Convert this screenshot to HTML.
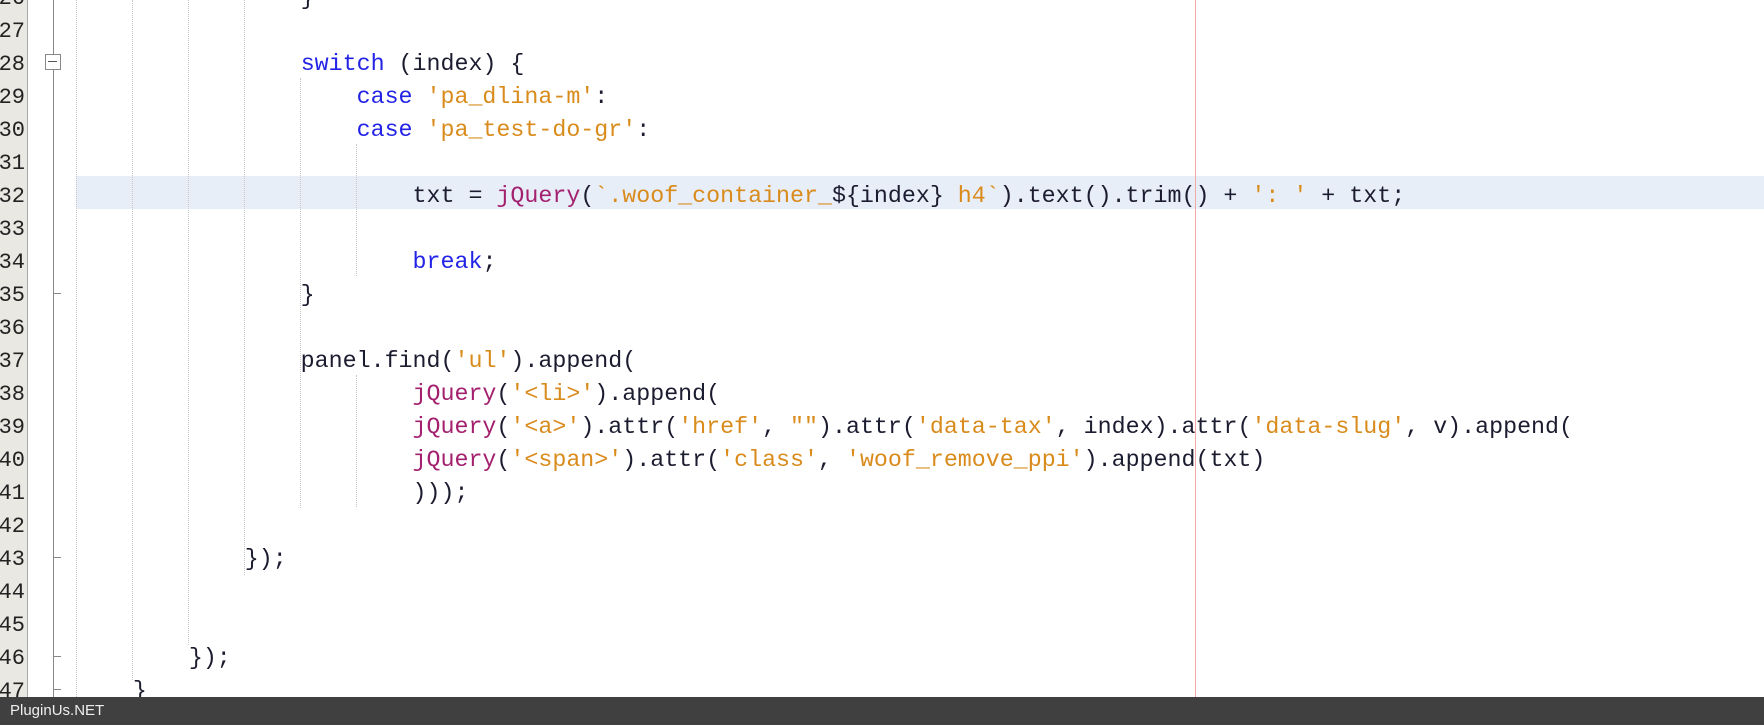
<!DOCTYPE html>
<html><head><meta charset="utf-8"><style>
body{margin:0;width:1764px;height:725px;overflow:hidden;background:#fff;position:relative;font-family:"Liberation Mono",monospace;}
.g{position:absolute;left:0;top:0;width:27px;height:697px;background:#e9e8e2;border-right:1px solid #a8a8a8;overflow:hidden}
.gt{position:absolute;left:0;top:3px;width:27px;height:694px}
.n{position:absolute;right:2px;font-size:22px;color:#222;line-height:33px;font-family:"Liberation Mono",monospace}
.l{position:absolute;left:77px;font-size:23.3px;line-height:33px;white-space:pre;color:#1c1c30}
.k{color:#2323e6}.s{color:#d98b1c}.j{color:#a3206e}
.v{position:absolute;width:0;border-left:1px dotted #c8c8c8}
.hl{position:absolute;left:76px;right:0;top:176px;height:33px;background:#e8eef8}
.foot{position:absolute;left:0;top:697px;width:1764px;height:28px;background:#404040;color:#eee;font-family:"Liberation Sans",sans-serif;font-size:15px;line-height:28px;padding-left:10px;box-sizing:border-box}
.t{position:absolute;left:0;top:3px;width:1764px;height:694px}
</style></head><body>
<div class="hl"></div>
<div class="g">
<div class="gt">
<div class="n" style="top:-21px">26</div><div class="n" style="top:12px">27</div><div class="n" style="top:45px">28</div><div class="n" style="top:78px">29</div><div class="n" style="top:111px">30</div><div class="n" style="top:144px">31</div><div class="n" style="top:177px">32</div><div class="n" style="top:210px">33</div><div class="n" style="top:243px">34</div><div class="n" style="top:276px">35</div><div class="n" style="top:309px">36</div><div class="n" style="top:342px">37</div><div class="n" style="top:375px">38</div><div class="n" style="top:408px">39</div><div class="n" style="top:441px">40</div><div class="n" style="top:474px">41</div><div class="n" style="top:507px">42</div><div class="n" style="top:540px">43</div><div class="n" style="top:573px">44</div><div class="n" style="top:606px">45</div><div class="n" style="top:639px">46</div><div class="n" style="top:672px">47</div>
</div></div>
<div style="position:absolute;left:53px;top:0;width:1px;height:697px;background:#888"></div>
<div style="position:absolute;left:45px;top:54px;width:14px;height:14px;border:1px solid #888;background:#fff"></div>
<div style="position:absolute;left:48px;top:61px;width:9px;height:1px;background:#555"></div>
<div style="position:absolute;left:53px;top:293px;width:8px;height:1px;background:#888"></div>
<div style="position:absolute;left:53px;top:557px;width:8px;height:1px;background:#888"></div>
<div style="position:absolute;left:53px;top:656px;width:8px;height:1px;background:#888"></div>
<div style="position:absolute;left:53px;top:689px;width:8px;height:1px;background:#888"></div>
<div class="v" style="left:76px;top:0;height:697px"></div>
<div class="v" style="left:132px;top:0;height:680px"></div>
<div class="v" style="left:188px;top:0;height:645px"></div>
<div class="v" style="left:244px;top:0;height:575px"></div>
<div class="v" style="left:300px;top:78px;height:430px"></div>
<div class="v" style="left:356px;top:144px;height:132px"></div>
<div class="v" style="left:356px;top:375px;height:132px"></div>
<div style="position:absolute;left:1195px;top:0;width:1px;height:697px;background:#f4a8a8"></div>
<div class="t">
<div class="l" style="top:-21px">                }</div>
<div class="l" style="top:45px">                <span class="k">switch</span> (index) {</div>
<div class="l" style="top:78px">                    <span class="k">case</span> <span class="s">'pa_dlina-m'</span>:</div>
<div class="l" style="top:111px">                    <span class="k">case</span> <span class="s">'pa_test-do-gr'</span>:</div>
<div class="l" style="top:177px">                        txt = <span class="j">jQuery</span>(<span class="s">`.woof_container_</span>${index}<span class="s"> h4`</span>).text().trim() + <span class="s">': '</span> + txt;</div>
<div class="l" style="top:243px">                        <span class="k">break</span>;</div>
<div class="l" style="top:276px">                }</div>
<div class="l" style="top:342px">                panel.find(<span class="s">'ul'</span>).append(</div>
<div class="l" style="top:375px">                        <span class="j">jQuery</span>(<span class="s">'&lt;li&gt;'</span>).append(</div>
<div class="l" style="top:408px">                        <span class="j">jQuery</span>(<span class="s">'&lt;a&gt;'</span>).attr(<span class="s">'href'</span>, <span class="s">""</span>).attr(<span class="s">'data-tax'</span>, index).attr(<span class="s">'data-slug'</span>, v).append(</div>
<div class="l" style="top:441px">                        <span class="j">jQuery</span>(<span class="s">'&lt;span&gt;'</span>).attr(<span class="s">'class'</span>, <span class="s">'woof_remove_ppi'</span>).append(txt)</div>
<div class="l" style="top:474px">                        )));</div>
<div class="l" style="top:540px">            });</div>
<div class="l" style="top:639px">        });</div>
<div class="l" style="top:672px">    }</div>
</div>
<div class="foot">PluginUs.NET</div>
</body></html>
